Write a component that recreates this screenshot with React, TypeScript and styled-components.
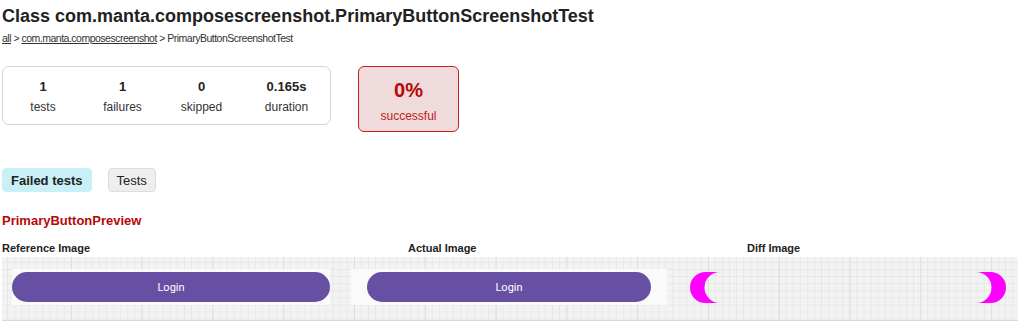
import styled, { createGlobalStyle } from "styled-components"

const Global = createGlobalStyle`
  body {
    margin: 0;
    background: #fff;
    font-family: "Liberation Sans", Arial, sans-serif;
    color: #222;
  }
`

const Page = styled.div`
  width: 1024px;
  height: 326px;
  overflow: hidden;
  padding: 0 2px;
  box-sizing: border-box;
`

const Title = styled.h1`
  margin: 0;
  padding-top: 6px;
  font-size: 18px;
  line-height: 21px;
  font-weight: bold;
  color: #222;
`

const Crumbs = styled.div`
  margin-top: 4px;
  font-size: 10.5px;
  letter-spacing: -0.5px;
  line-height: 14px;
  color: #333;

  > a {
    color: #333;
    text-decoration: underline;
  }
`

const SummaryRow = styled.div`
  display: flex;
  align-items: flex-start;
  gap: 27px;
  margin-top: 21px;
`

const Summary = styled.div`
  width: 329px;
  height: 59px;
  box-sizing: border-box;
  border: 1px solid #d4d4d4;
  border-radius: 7px;
  display: grid;
  grid-template-columns: 80px 79px 79px 91px;
  padding-top: 12px;
`

const Counter = styled.div`
  text-align: center;
  > b {
    display: block;
    font-size: 13px;
    line-height: 16px;
  }
  > span {
    display: block;
    margin-top: 5px;
    font-size: 12px;
    line-height: 14px;
    color: #333;
  }
`

const Success = styled.div`
  width: 101px;
  height: 66px;
  box-sizing: border-box;
  border: 1px solid #c81e1e;
  border-radius: 6px;
  background: #efdbdc;
  color: #b60808;
  text-align: center;
  padding-top: 12px;

  > b {
    display: block;
    font-size: 20px;
    line-height: 22px;
  }
  > span {
    display: block;
    margin-top: 8px;
    font-size: 12px;
    line-height: 14px;
    color: #c02020;
  }
`

const Tabs = styled.div`
  display: flex;
  gap: 16px;
  margin-top: 36px;
`

const Tab = styled.div<{ $active?: boolean }>`
  height: 24px;
  box-sizing: border-box;
  padding: 0 8px;
  display: flex;
  align-items: center;
  border-radius: 4px;
  font-size: 13px;
  font-weight: ${(p) => (p.$active ? "bold" : "normal")};
  background: ${(p) => (p.$active ? "#c8f0f6" : "#eeeeee")};
  border: 1px solid ${(p) => (p.$active ? "#c8f0f6" : "#dddddd")};
  color: #222;
`

const TestName = styled.h2`
  margin: 21px 0 0;
  font-size: 13px;
  line-height: 16px;
  font-weight: bold;
  color: #b60808;
`

const Labels = styled.div`
  display: grid;
  grid-template-columns: 406px 339px 1fr;
  margin-top: 13px;
  font-size: 11px;
  line-height: 13px;
  font-weight: bold;
  color: #222;
`

const Strip = styled.div`
  margin-top: 2px;
  width: 1016px;
  height: 64px;
  box-sizing: border-box;
  border-bottom: 1px solid #d8d8d8;
  background-color: #f3f3f3;
  background-image:
    linear-gradient(to right, #dedede 1px, transparent 1px),
    linear-gradient(to right, #e7e7e7 1px, transparent 1px),
    linear-gradient(to bottom, #e7e7e7 1px, transparent 1px);
  background-size: 70.8px 100%, 7.08px 7.08px, 7.08px 7.08px;
  background-position: -2px 0, -2px 0, 0 5px;
  display: flex;
  align-items: flex-start;
`

const Shot = styled.div<{ $width: number; $pad: number; $left: number }>`
  margin-left: ${(p) => p.$left}px;
  margin-top: 12px;
  width: ${(p) => p.$width}px;
  height: 36px;
  box-sizing: border-box;
  background: #fafafa;
  padding: 3px ${(p) => p.$pad}px;
`

const LoginButton = styled.div`
  height: 30px;
  border-radius: 15px;
  background: #6750a4;
  color: #fff;
  font-family: Roboto, "Liberation Sans", sans-serif;
  font-size: 11px;
  display: flex;
  align-items: center;
  justify-content: center;
`

const Diff = styled.div`
  margin-left: 23px;
  margin-top: 15px;
  width: 316px;
  height: 31px;
  display: flex;
  justify-content: space-between;
`

function Crescent({ flip }: { flip?: boolean }) {
  return (
    <svg width="30" height="31" viewBox="0 0 30 31" style={{ transform: flip ? "scaleX(-1)" : undefined }}>
      <path
        d="M30 0 H15.5 A15.5 15.5 0 0 0 15.5 31 H30 A15.5 15.5 0 0 1 30 0 Z"
        fill="#ff00ff"
      />
    </svg>
  )
}

export default function App() {
  return (
    <Page>
      <Global />
      <Title>Class com.manta.composescreenshot.PrimaryButtonScreenshotTest</Title>
      <Crumbs>
        <a href="#">all</a> &gt; <a href="#">com.manta.composescreenshot</a> &gt; PrimaryButtonScreenshotTest
      </Crumbs>
      <SummaryRow>
        <Summary>
          <Counter><b>1</b><span>tests</span></Counter>
          <Counter><b>1</b><span>failures</span></Counter>
          <Counter><b>0</b><span>skipped</span></Counter>
          <Counter><b>0.165s</b><span>duration</span></Counter>
        </Summary>
        <Success>
          <b>0%</b>
          <span>successful</span>
        </Success>
      </SummaryRow>
      <Tabs>
        <Tab $active>Failed tests</Tab>
        <Tab>Tests</Tab>
      </Tabs>
      <TestName>PrimaryButtonPreview</TestName>
      <Labels>
        <span>Reference Image</span>
        <span>Actual Image</span>
        <span>Diff Image</span>
      </Labels>
      <Strip>
        <Shot $left={10} $width={318} $pad={0}>
          <LoginButton>Login</LoginButton>
        </Shot>
        <Shot $left={21} $width={316} $pad={16}>
          <LoginButton>Login</LoginButton>
        </Shot>
        <Diff>
          <Crescent />
          <Crescent flip />
        </Diff>
      </Strip>
    </Page>
  )
}
